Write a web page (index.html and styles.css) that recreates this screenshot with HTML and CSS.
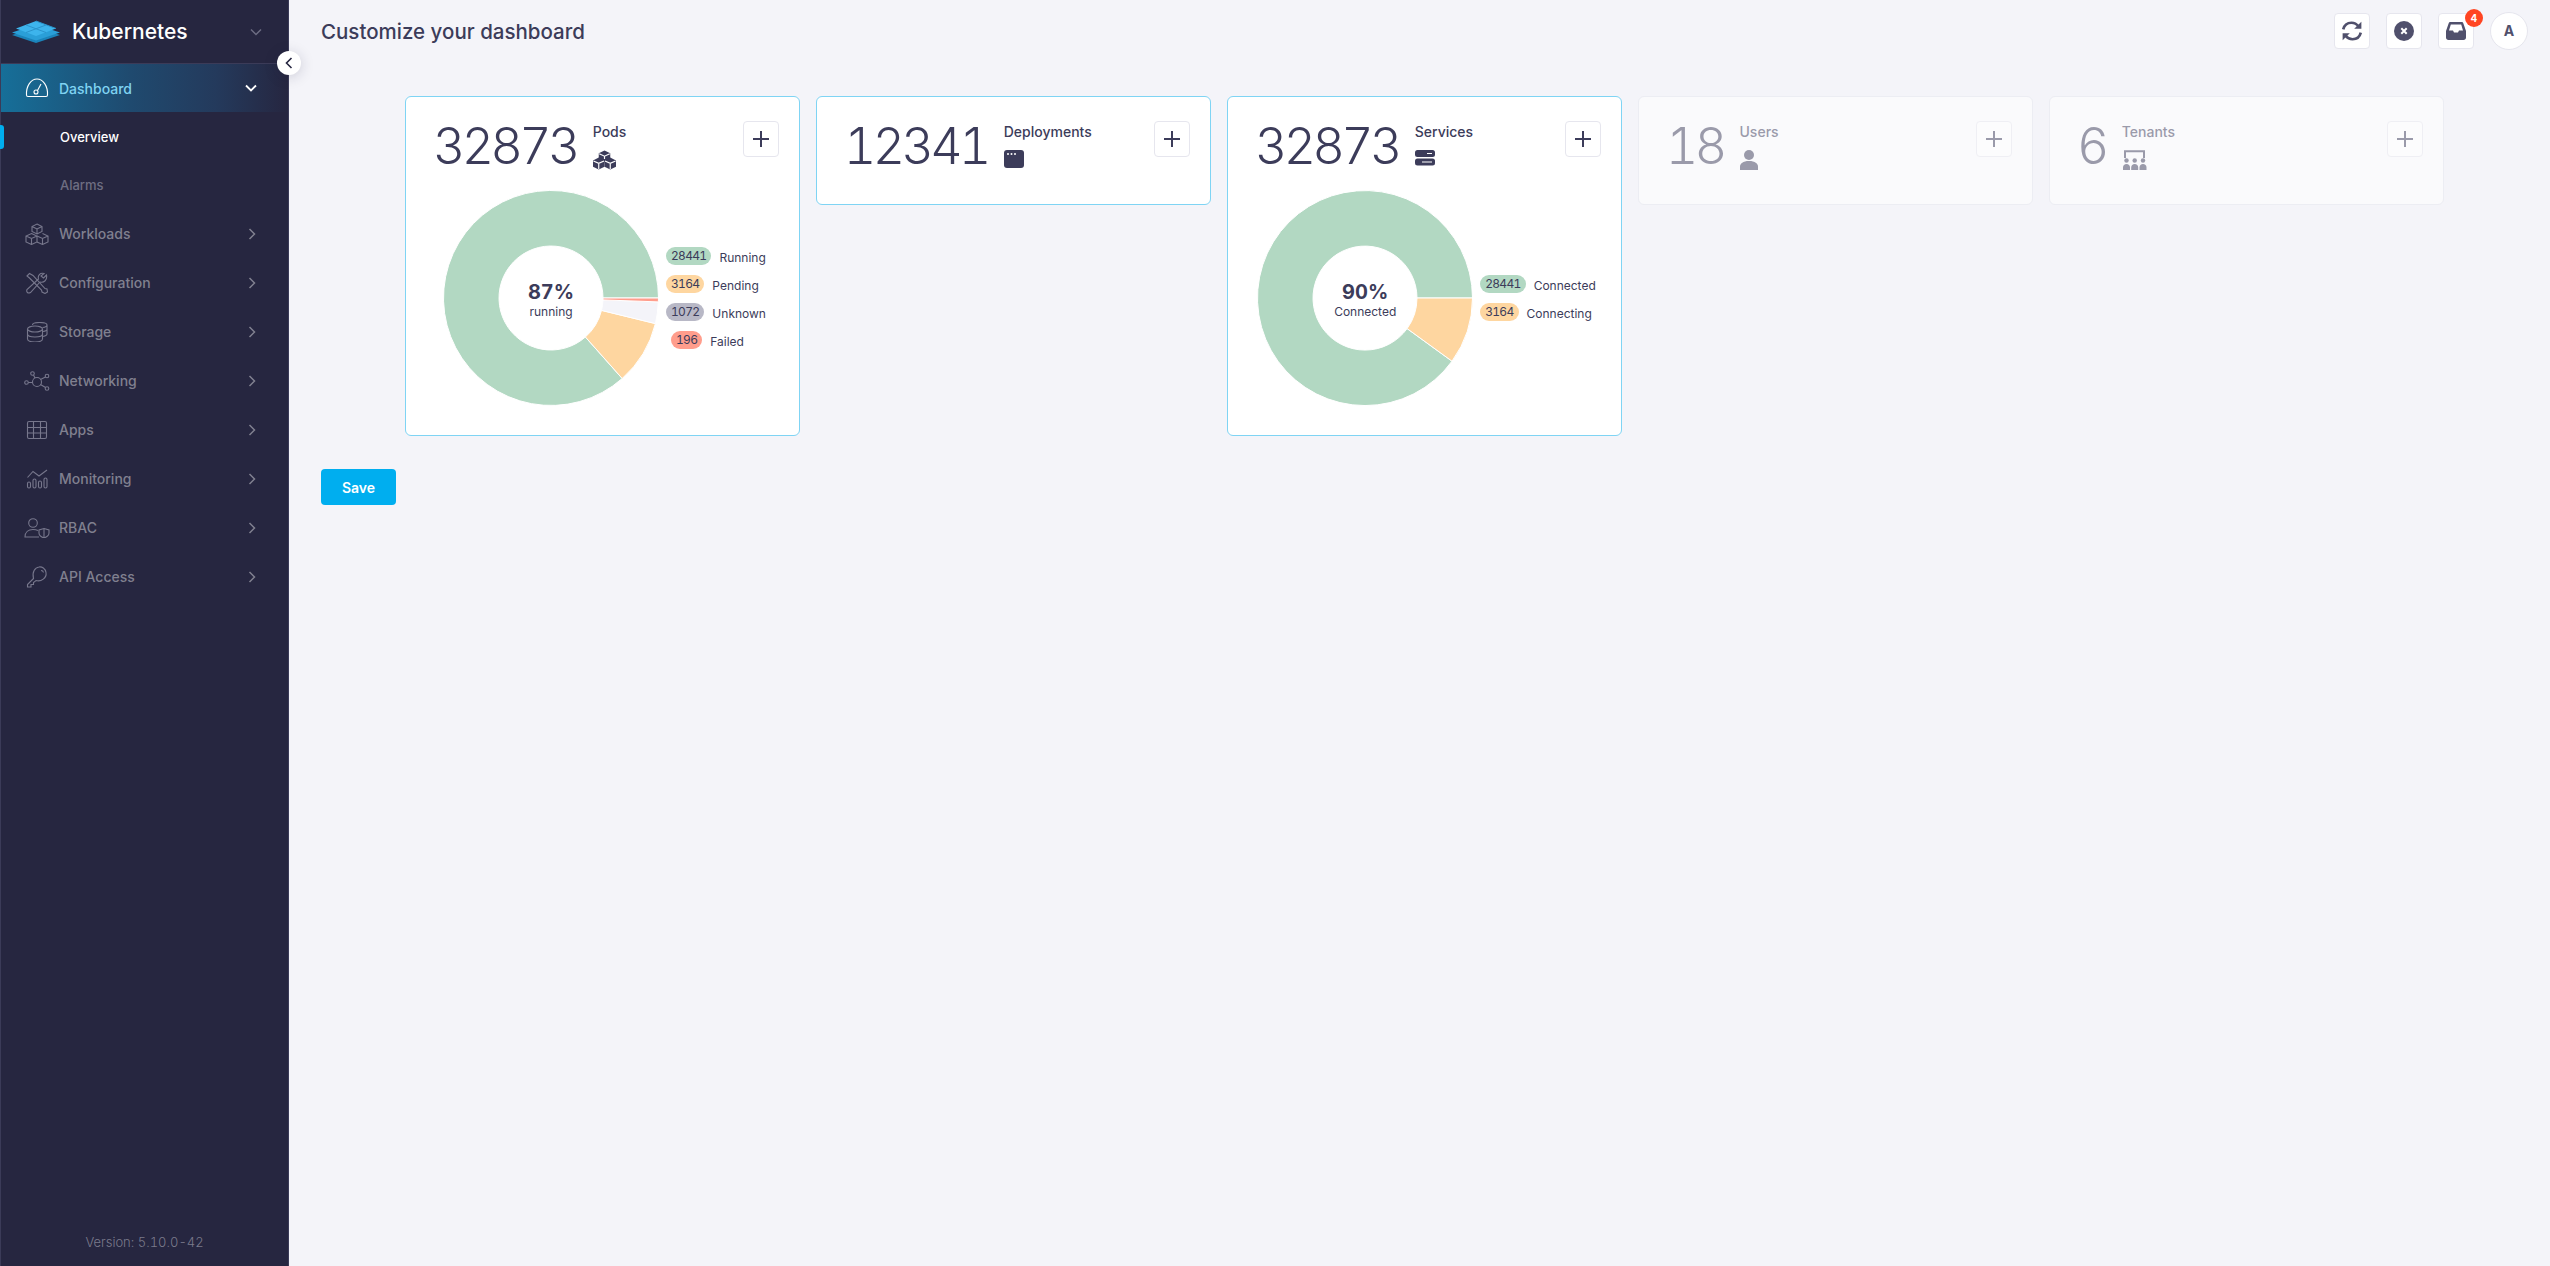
FILE: index.html
```html
<!DOCTYPE html>
<html lang="en">

<head>
    <meta charset="UTF-8">
    <meta name="viewport" content="width=device-width, initial-scale=1.0">
    <title>Customize your dashboard</title>
    <link rel="stylesheet" href="styles.css">
</head>

<body>
    <aside class="sidebar">
        <div class="brand">
            <svg class="brand-logo" width="50" height="24" viewBox="0 0 50 24">
                <path d="M25 7 49 15 25 23 1 15Z" fill="#1b84bb" />
                <path d="M25 4.500 49 12.500 25 20.500 1 12.500Z" fill="#2a9fd8" />
                <path d="M25 1 45 8.500 25 16 5 8.500Z" fill="#3db4ec" />
                <path d="M15 5 35 12.500M25 1 45 8.500M35 5 15 12.500" stroke="#2a93cb" stroke-width="1" fill="none" />
            </svg>
            <span class="brand-name">Kubernetes</span>
            <svg class="chev-down dim" width="12" height="8" viewBox="0 0 12 8"><path d="M1 1.500 6 6.500 11 1.500" /></svg>
        </div>
        <button class="collapse">
            <svg width="8" height="12" viewBox="0 0 8 12"><path d="M6.500 1 1.500 6 6.500 11" /></svg>
        </button>

        <nav class="menu">
            <a class="menu-item active">
                <svg class="menu-icon" width="24" height="20" viewBox="0 0 24 20">
                    <path d="M3 18.500A1.500 1.500 0 0 1 1.500 17C1 8 6 1 12 1S23 8 22.500 17A1.500 1.500 0 0 1 21 18.500Z" />
                    <circle cx="11" cy="14" r="2" />
                    <path d="M12.500 12.500 16 6" />
                </svg>
                <span>Dashboard</span>
                <svg class="chev-down" width="12" height="8" viewBox="0 0 12 8"><path d="M1 1.500 6 6.500 11 1.500" /></svg>
            </a>
            <a class="sub-item current">Overview</a>
            <a class="sub-item">Alarms</a>

            <a class="menu-item">
                <svg class="menu-icon" width="24" height="22" viewBox="0 0 24 22">
                    <path d="M12 1 17 3.500V8.500L12 11 7 8.500V3.500ZM7 3.500 12 6 17 3.500M12 6V11" />
                    <path d="M6.500 10.500 12 13V19L6.500 21.500 1 19V13ZM1 13 6.500 15.500 12 13M6.500 15.500V21.500" />
                    <path d="M17.500 10.500 23 13V19L17.500 21.500 12 19M12 13 17.500 15.500 23 13M17.500 15.500V21.500" />
                </svg>
                <span>Workloads</span>
                <svg class="chev-right" width="8" height="12" viewBox="0 0 8 12"><path d="M1.500 1 6.500 6 1.500 11" /></svg>
            </a>
            <a class="menu-item">
                <svg class="menu-icon" width="24" height="22" viewBox="0 0 24 22">
                    <path d="M2 4 4.500 1.500 8 3.500 20 16.500 22 17 22.500 20 20 21.500 17 20 16.500 18 4.500 6Z" />
                    <path d="M21.500 3 18.500 6 16 4 19 1.500C15 .5 12.500 3.500 13.500 7L2 17.500C1 20 3 22 5.500 20.500L15 10C19 11 22.500 8 21.500 3Z" />
                </svg>
                <span>Configuration</span>
                <svg class="chev-right" width="8" height="12" viewBox="0 0 8 12"><path d="M1.500 1 6.500 6 1.500 11" /></svg>
            </a>
            <a class="menu-item">
                <svg class="menu-icon" width="24" height="20" viewBox="0 0 24 20">
                    <ellipse cx="10" cy="7" rx="7.500" ry="3" />
                    <path d="M2.500 7V17C2.500 18.700 5.500 20 10 20S17.500 18.700 17.500 17V7M2.500 12C2.500 13.700 5.500 15 10 15S17.500 13.700 17.500 12" />
                    <path d="M7.500 3C7.500 1.500 10.500 .5 14.500 .5S22 1.500 22 3V12C22 13 20.500 14 18 14.500M17.500 5.500C20 5.200 22 4.300 22 3M18 9.500C20 9.200 22 8.300 22 7.500" />
                </svg>
                <span>Storage</span>
                <svg class="chev-right" width="8" height="12" viewBox="0 0 8 12"><path d="M1.500 1 6.500 6 1.500 11" /></svg>
            </a>
            <a class="menu-item">
                <svg class="menu-icon wide" width="26" height="20" viewBox="0 0 26 20">
                    <circle cx="13" cy="11" r="4.500" />
                    <circle cx="8.500" cy="2.500" r="1.800" />
                    <circle cx="23" cy="5" r="1.800" />
                    <circle cx="23" cy="17.500" r="1.800" />
                    <circle cx="2.500" cy="11.500" r="1.800" />
                    <path d="M4.300 11.500H8.500M9.500 4 11 7M21.500 6 16.500 8.500M21.500 16.500 16.500 13.500" />
                </svg>
                <span>Networking</span>
                <svg class="chev-right" width="8" height="12" viewBox="0 0 8 12"><path d="M1.500 1 6.500 6 1.500 11" /></svg>
            </a>
            <a class="menu-item">
                <svg class="menu-icon" width="24" height="20" viewBox="0 0 24 20">
                    <rect x="2.500" y="1.500" width="19" height="17" rx="1.500" />
                    <path d="M8.500 1.500V18.500M15.500 1.500V18.500M2.500 7.500H21.500M2.500 13H21.500" />
                </svg>
                <span>Apps</span>
                <svg class="chev-right" width="8" height="12" viewBox="0 0 8 12"><path d="M1.500 1 6.500 6 1.500 11" /></svg>
            </a>
            <a class="menu-item">
                <svg class="menu-icon" width="24" height="20" viewBox="0 0 24 20">
                    <path d="M2.500 8.500 8 2.500 14 7 22 1" />
                    <rect x="2.500" y="13" width="3" height="6" rx="1.500" />
                    <rect x="8" y="10" width="3" height="9" rx="1.500" />
                    <rect x="13.500" y="12" width="3" height="7" rx="1.500" />
                    <rect x="19" y="9" width="3" height="10" rx="1.500" />
                </svg>
                <span>Monitoring</span>
                <svg class="chev-right" width="8" height="12" viewBox="0 0 8 12"><path d="M1.500 1 6.500 6 1.500 11" /></svg>
            </a>
            <a class="menu-item">
                <svg class="menu-icon wide" width="26" height="20" viewBox="0 0 26 20">
                    <circle cx="9" cy="5" r="4.300" />
                    <path d="M14 12.500C12.500 11.800 11 11.500 9 11.500 4.500 11.500 1 14 1 19H15" />
                    <path d="M20 10.500 25 12V15C25 17.500 23 19 20 20 17 19 15 17.500 15 15V12ZM20 10.500V20" />
                </svg>
                <span>RBAC</span>
                <svg class="chev-right" width="8" height="12" viewBox="0 0 8 12"><path d="M1.500 1 6.500 6 1.500 11" /></svg>
            </a>
            <a class="menu-item">
                <svg class="menu-icon" width="24" height="22" viewBox="0 0 24 22">
                    <path d="M8.500 12.500 2.500 18.500V21H6V18.500H8.500V16.500L11 14.500C16 16 22 12 21 6.500 20.300 2.500 17 .5 14 1 10 1.500 6.800 6 8.500 12.500Z" />
                    <path d="M16 4.500C17.500 4.500 18.300 5.500 18.500 6.500" />
                </svg>
                <span>API Access</span>
                <svg class="chev-right" width="8" height="12" viewBox="0 0 8 12"><path d="M1.500 1 6.500 6 1.500 11" /></svg>
            </a>
        </nav>

        <div class="version">Version: 5.10.0-42</div>
    </aside>

    <main class="main">
        <header class="topbar">
            <h1>Customize your dashboard</h1>
            <div class="top-actions">
                <button class="icon-btn">
                    <svg width="22" height="22" viewBox="0 0 20 20">
                        <path class="line" d="M2 8.500C3 4.500 6 2.500 9.500 2.500 12.500 2.500 14.500 4 16 6" />
                        <path class="solid" d="M18.500 1.500V8H12Z" />
                        <path class="line" d="M18 11.500C17 15.500 14 17.500 10.500 17.500 7.500 17.500 5.500 16 4 14" />
                        <path class="solid" d="M1.500 18.500V12H8Z" />
                    </svg>
                </button>
                <button class="icon-btn">
                    <svg width="20" height="20" viewBox="0 0 20 20">
                        <circle class="solid" cx="10" cy="10" r="10" />
                        <path class="cross" d="M7.300 7.300 12.700 12.700M12.700 7.300 7.300 12.700" />
                    </svg>
                </button>
                <button class="icon-btn has-badge">
                    <svg width="20" height="18" viewBox="0 0 20 18">
                        <path class="solid" d="M4.500 0H15.500C16.500 0 17 .5 17.300 1.300L20 9V15.500C20 17 19 18 17.500 18H2.500C1 18 0 17 0 15.500V9L2.700 1.300C3 .5 3.500 0 4.500 0ZM4.800 2.500 3 8.500H7L8 10.500H12L13 8.500H17L15.200 2.500Z" fill-rule="evenodd" />
                    </svg>
                    <span class="badge">4</span>
                </button>
                <div class="avatar">A</div>
            </div>
        </header>

        <section class="cards">
            <article class="card">
                <div class="card-head">
                    <div class="count">32873</div>
                    <div class="kind">
                        <div class="kind-name">Pods</div>
                        <svg class="kind-icon" width="23" height="20" viewBox="0 0 24 20">
                            <path d="M12 0 18 3V9.500L12 12.500 6 9.500V3Z" />
                            <path d="M6 7.500 12 10.500V17L6 20 0 17V10.500Z" />
                            <path d="M18 7.500 24 10.500V17L18 20 12 17V10.500Z" />
                            <path class="cut" d="M6.500 3.500 12 6 17.500 3.500M12 6V9M.5 11 6 13.500 11.500 11M6 13.500V19.500M12.500 11 18 13.500 23.500 11M18 13.500V19.500" />
                        </svg>
                    </div>
                    <button class="add-btn"><svg width="16" height="16" viewBox="0 0 16 16"><path d="M8 0V16M0 8H16" /></svg></button>
                </div>
                <div class="chart">
                    <div class="donut">
                        <svg width="216" height="216" viewBox="-108 -108 216 216">
                            <path class="s-running" d="M107.500 0A107.500 107.500 0 1 0 71.200 80.500L34.400 39A52 52 0 1 1 52 0Z" />
                            <path class="s-pending" d="M104.400 25.600A107.500 107.500 0 0 1 71.200 80.500L34.400 39A52 52 0 0 0 50.500 12.400Z" />
                            <path class="s-unknown" d="M107.300 3.900A107.500 107.500 0 0 1 104.400 25.600L50.500 12.400A52 52 0 0 0 52 1.900Z" />
                            <path class="s-failed" d="M107.500 0A107.500 107.500 0 0 1 107.300 3.900L52 1.900A52 52 0 0 0 52 0Z" />
                        </svg>
                        <div class="donut-center">
                            <strong>87%</strong>
                            <span>running</span>
                        </div>
                    </div>
                    <ul class="legend">
                        <li><span class="pill p-running">28441</span><span class="legend-label">Running</span></li>
                        <li><span class="pill p-pending">3164</span><span class="legend-label">Pending</span></li>
                        <li><span class="pill p-unknown">1072</span><span class="legend-label">Unknown</span></li>
                        <li class="indent"><span class="pill p-failed">196</span><span class="legend-label">Failed</span></li>
                    </ul>
                </div>
            </article>

            <article class="card">
                <div class="card-head">
                    <div class="count">12341</div>
                    <div class="kind">
                        <div class="kind-name">Deployments</div>
                        <svg class="kind-icon" width="20" height="18" viewBox="0 0 20 18">
                            <rect width="20" height="18" rx="3" />
                            <circle class="dot" cx="4" cy="4" r="1" />
                            <circle class="dot" cx="7.500" cy="4" r="1" />
                            <circle class="dot" cx="11" cy="4" r="1" />
                        </svg>
                    </div>
                    <button class="add-btn"><svg width="16" height="16" viewBox="0 0 16 16"><path d="M8 0V16M0 8H16" /></svg></button>
                </div>
            </article>

            <article class="card">
                <div class="card-head">
                    <div class="count">32873</div>
                    <div class="kind">
                        <div class="kind-name">Services</div>
                        <svg class="kind-icon" width="20" height="16" viewBox="0 0 20 16">
                            <rect width="20" height="7" rx="2.500" />
                            <rect y="8.500" width="20" height="7" rx="2.500" />
                            <path class="cut" d="M12 3.500H17M7 12H17" />
                        </svg>
                    </div>
                    <button class="add-btn"><svg width="16" height="16" viewBox="0 0 16 16"><path d="M8 0V16M0 8H16" /></svg></button>
                </div>
                <div class="chart">
                    <div class="donut">
                        <svg width="216" height="216" viewBox="-108 -108 216 216">
                            <path class="s-running" d="M107.500 0A107.500 107.500 0 1 0 87 63.200L42.100 30.600A52 52 0 1 1 52 0Z" />
                            <path class="s-pending" d="M107.500 0A107.500 107.500 0 0 1 87 63.200L42.100 30.600A52 52 0 0 0 52 0Z" />
                        </svg>
                        <div class="donut-center">
                            <strong>90%</strong>
                            <span>Connected</span>
                        </div>
                    </div>
                    <ul class="legend">
                        <li><span class="pill p-running">28441</span><span class="legend-label">Connected</span></li>
                        <li><span class="pill p-pending">3164</span><span class="legend-label">Connecting</span></li>
                    </ul>
                </div>
            </article>

            <article class="card off">
                <div class="card-head">
                    <div class="count">18</div>
                    <div class="kind">
                        <div class="kind-name">Users</div>
                        <svg class="kind-icon" width="18" height="20" viewBox="0 0 18 20">
                            <circle cx="9" cy="5" r="5" />
                            <path d="M0 20V16.500C0 13.500 3 11 9 11S18 13.500 18 16.500V20Z" />
                        </svg>
                    </div>
                    <button class="add-btn"><svg width="16" height="16" viewBox="0 0 16 16"><path d="M8 0V16M0 8H16" /></svg></button>
                </div>
            </article>

            <article class="card off">
                <div class="card-head">
                    <div class="count">6</div>
                    <div class="kind">
                        <div class="kind-name">Tenants</div>
                        <svg class="kind-icon" width="26" height="20" viewBox="0 0 26 20">
                            <path class="frame" d="M3 8V1.200H22V8" />
                            <circle cx="4.500" cy="10.500" r="2.200" />
                            <circle cx="12.700" cy="10.500" r="2.200" />
                            <circle cx="21" cy="10.500" r="2.200" />
                            <path d="M1 20V17.500C1 15.500 2.500 14 4.500 14S8 15.500 8 17.500V20ZM9.200 20V17.500C9.200 15.500 10.700 14 12.700 14S16.200 15.500 16.200 17.500V20ZM17.500 20V17.500C17.500 15.500 19 14 21 14S24.500 15.500 24.500 17.500V20Z" />
                        </svg>
                    </div>
                    <button class="add-btn"><svg width="16" height="16" viewBox="0 0 16 16"><path d="M8 0V16M0 8H16" /></svg></button>
                </div>
            </article>
        </section>

        <button class="save">Save</button>
    </main>
</body>

</html>
```

FILE: styles.css
```css
:root {
    --bg: #f4f4f9;
    --side: #262640;
    --ink: #3c3c5a;
    --dim: #80808f;
    --accent: #00aeef;
    --line: #e6e6ee;
}

* {
    box-sizing: border-box;
    margin: 0;
    padding: 0;
}

html,
body {
    height: 100%;
}

body {
    display: flex;
    background: var(--bg);
    color: var(--ink);
    font-family: Inter, "Noto Sans", sans-serif;
    font-feature-settings: "tnum";
    overflow: hidden;
}

button {
    font-family: inherit;
    cursor: pointer;
}

/* sidebar */
.sidebar {
    position: relative;
    display: flex;
    flex-direction: column;
    flex: 0 0 289px;
    background: var(--side);
    border-left: 1px solid #3b3b58;
    border-right: 1px solid #3b3b58;
}

.brand {
    display: flex;
    align-items: center;
    height: 64px;
    padding-left: 10px;
    border-bottom: 1px solid #3b3b58;
}

.brand-name {
    margin-left: 11px;
    color: #fff;
    font-size: 21px;
    font-weight: 500;
}

.brand .chev-down {
    margin-left: auto;
    margin-right: 26px;
}

.collapse {
    position: absolute;
    top: 51px;
    right: -13px;
    display: flex;
    align-items: center;
    justify-content: center;
    width: 24px;
    height: 24px;
    background: #fff;
    border: none;
    border-radius: 50%;
    box-shadow: 0 2px 14px rgba(30, 30, 60, 0.18);
}

.collapse path {
    fill: none;
    stroke: #252540;
    stroke-width: 1.6;
}

.chev-down path,
.chev-right path {
    fill: none;
    stroke: var(--dim);
    stroke-width: 1.5;
}

.chev-down.dim path {
    stroke: #6c6c82;
}

.menu-item {
    display: flex;
    align-items: center;
    height: 49px;
    padding: 0 32px 0 24px;
    color: var(--dim);
    font-size: 14px;
    font-weight: 500;
}

.menu-icon {
    flex: none;
    margin-right: 10px;
}

.menu-icon.wide {
    margin-left: -1px;
    margin-right: 9px;
}

.menu-icon path,
.menu-icon circle,
.menu-icon ellipse,
.menu-icon rect {
    fill: none;
    stroke: #77778c;
    stroke-width: 1.1;
}

.menu-item .chev-right {
    margin-left: auto;
}

.menu-item.active {
    height: 48px;
    margin-bottom: 1px;
    background: linear-gradient(90deg, #166f99 0%, #1f4a6f 45%, #243a5c 75%, var(--side) 100%);
    color: #7fd3f2;
}

.menu-item.active .menu-icon path,
.menu-item.active .menu-icon circle {
    stroke: #fff;
}

.menu-item.active .chev-down {
    margin-left: auto;
    margin-right: -1px;
}

.menu-item.active .chev-down path {
    stroke: #fff;
    stroke-width: 1.8;
}

.sub-item {
    position: relative;
    display: block;
    height: 48px;
    padding-left: 59px;
    color: #6e6e82;
    font-size: 13px;
    font-weight: 500;
    line-height: 48px;
}

.sub-item.current {
    color: #fff;
}

.sub-item.current::before {
    content: "";
    position: absolute;
    top: 12px;
    left: -1px;
    width: 4px;
    height: 24px;
    background: var(--accent);
    border-radius: 0 3px 3px 0;
}

.version {
    margin-top: auto;
    padding-bottom: 16px;
    color: #7a7a8b;
    font-size: 13px;
    font-weight: 300;
    text-align: center;
}

/* main area */
.main {
    flex: 1;
    min-width: 0;
}

.topbar {
    display: flex;
    align-items: center;
    justify-content: space-between;
    height: 62px;
    padding: 0 22px 0 32px;
}

.topbar h1 {
    font-size: 20.5px;
    font-weight: 500;
}

.top-actions {
    display: flex;
    align-items: center;
    gap: 16px;
}

.icon-btn {
    position: relative;
    display: flex;
    align-items: center;
    justify-content: center;
    width: 36px;
    height: 36px;
    background: #fff;
    border: 1px solid var(--line);
    border-radius: 4px;
}

.icon-btn .solid {
    fill: #50506c;
}

.icon-btn .line {
    fill: none;
    stroke: #50506c;
    stroke-width: 2.4;
}

.icon-btn .cross {
    fill: none;
    stroke: #fff;
    stroke-width: 2;
}

.badge {
    position: absolute;
    top: -5px;
    right: -10px;
    width: 18px;
    height: 18px;
    background: #ff4522;
    border-radius: 50%;
    color: #fff;
    font-size: 10px;
    font-weight: 700;
    line-height: 18px;
    text-align: center;
}

.avatar {
    width: 38px;
    height: 38px;
    background: #fff;
    border: 1px solid var(--line);
    border-radius: 50%;
    color: #50506c;
    font-size: 14px;
    font-weight: 700;
    line-height: 36px;
    text-align: center;
}

/* cards */
.cards {
    display: flex;
    align-items: flex-start;
    gap: 16px;
    margin: 34px 0 0 116px;
}

.card {
    flex: 0 0 395px;
    padding: 24px 20px 29px 27px;
    background: #fff;
    border: 1px solid #7fd4f4;
    border-radius: 6px;
}

.card.off {
    background: rgba(255, 255, 255, 0.5);
    border-color: #ecedf3;
}

.card.off .card-head {
    opacity: 0.5;
}

.card-head {
    display: flex;
    align-items: flex-start;
    height: 54px;
}

.count {
    color: var(--ink);
    font-size: 50px;
    font-weight: 300;
    letter-spacing: -3.6px;
    line-height: 50px;
}

.kind {
    margin-left: 16px;
    padding-top: 2px;
}

.kind-name {
    font-size: 14px;
    font-weight: 450;
    line-height: 17px;
}

.kind-icon {
    display: block;
    margin-top: 10px;
}

.kind-icon path,
.kind-icon rect,
.kind-icon circle {
    fill: var(--ink);
}

.kind-icon .dot {
    fill: #fff;
}

.kind-icon .cut {
    fill: none;
    stroke: #fff;
    stroke-width: 1.2;
}

.kind-icon .frame {
    fill: none;
    stroke: var(--ink);
    stroke-width: 2;
}

.add-btn {
    display: flex;
    align-items: center;
    justify-content: center;
    width: 36px;
    height: 36px;
    margin-left: auto;
    background: #fff;
    border: 1px solid var(--line);
    border-radius: 4px;
}

.add-btn path {
    fill: none;
    stroke: var(--ink);
    stroke-width: 2;
}

.chart {
    display: flex;
    align-items: center;
    justify-content: center;
    gap: 7px;
    margin: 15px 0 0 -3px;
}

.donut {
    position: relative;
    flex: none;
    width: 216px;
    height: 216px;
}

.donut svg {
    display: block;
}

.donut path {
    stroke: #fff;
    stroke-width: 1;
}

.s-running {
    fill: #b2d8c2;
}

.s-pending {
    fill: #fed6a0;
}

.s-unknown {
    fill: #f4f4f9;
}

.s-failed {
    fill: #ff9d8c;
}

.donut-center {
    position: absolute;
    inset: 0;
    display: flex;
    flex-direction: column;
    align-items: center;
    justify-content: center;
    padding-top: 4px;
}

.donut-center strong {
    font-size: 20px;
    font-weight: 700;
    line-height: 24px;
}

.donut-center span {
    font-size: 12px;
    line-height: 16px;
}

.legend {
    list-style: none;
}

.legend li {
    display: flex;
    align-items: center;
    gap: 8px;
    height: 18px;
    margin-bottom: 10px;
}

.legend li:last-child {
    margin-bottom: 0;
}

.legend li.indent {
    padding-left: 5px;
}

.legend-label {
    padding-top: 2px;
    font-size: 12px;
    white-space: nowrap;
}

.pill {
    padding: 0 5px;
    border-radius: 9px;
    font-size: 12px;
    letter-spacing: -0.7px;
    line-height: 18px;
}

.p-running {
    background: #b2d8c2;
}

.p-pending {
    background: #fed6a0;
}

.p-unknown {
    background: #b8b8c6;
}

.p-failed {
    background: #ff9d8c;
}

.save {
    display: block;
    width: 75px;
    height: 36px;
    margin: 33px 0 0 32px;
    background: var(--accent);
    border: none;
    border-radius: 4px;
    color: #fff;
    font-size: 14px;
    font-weight: 600;
}
```
